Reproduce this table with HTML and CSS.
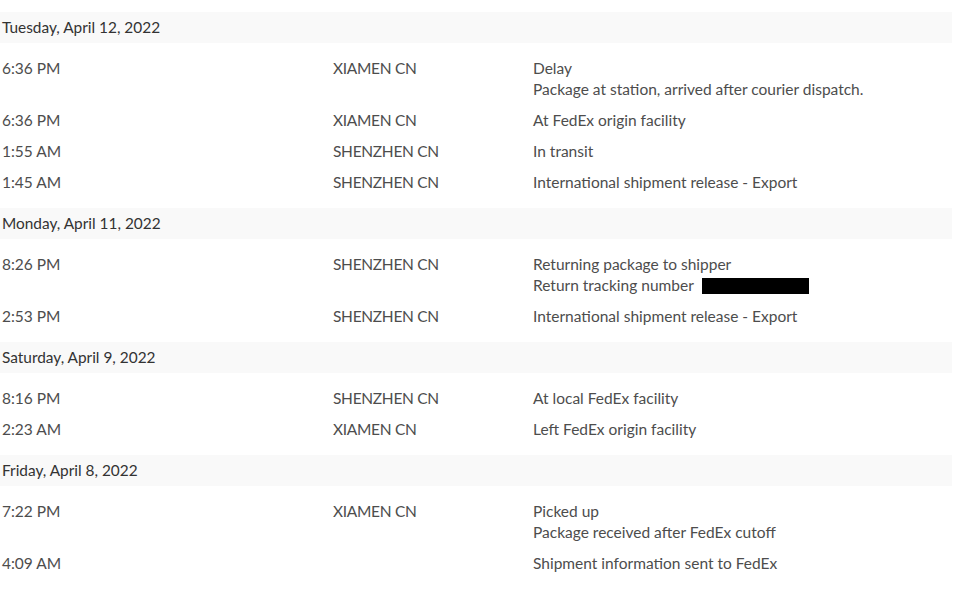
FILE: index.html
```html
<!DOCTYPE html>
<html>
<head>
<meta charset="utf-8">
<link rel="stylesheet" href="styles.css">
</head>
<body>
<div class="history">
  <section class="group">
    <div class="date">Tuesday, April 12, 2022</div>
    <div class="rows">
      <div class="row"><div class="time">6:36 PM</div><div class="loc">XIAMEN CN</div><div class="desc"><div>Delay</div><div>Package at station, arrived after courier dispatch.</div></div></div>
      <div class="row"><div class="time">6:36 PM</div><div class="loc">XIAMEN CN</div><div class="desc"><div>At FedEx origin facility</div></div></div>
      <div class="row"><div class="time">1:55 AM</div><div class="loc">SHENZHEN CN</div><div class="desc"><div>In transit</div></div></div>
      <div class="row"><div class="time">1:45 AM</div><div class="loc">SHENZHEN CN</div><div class="desc"><div>International shipment release - Export</div></div></div>
    </div>
  </section>
  <section class="group">
    <div class="date">Monday, April 11, 2022</div>
    <div class="rows">
      <div class="row"><div class="time">8:26 PM</div><div class="loc">SHENZHEN CN</div><div class="desc"><div>Returning package to shipper</div><div>Return tracking number <span class="redact"></span></div></div></div>
      <div class="row"><div class="time">2:53 PM</div><div class="loc">SHENZHEN CN</div><div class="desc"><div>International shipment release - Export</div></div></div>
    </div>
  </section>
  <section class="group">
    <div class="date">Saturday, April 9, 2022</div>
    <div class="rows">
      <div class="row"><div class="time">8:16 PM</div><div class="loc">SHENZHEN CN</div><div class="desc"><div>At local FedEx facility</div></div></div>
      <div class="row"><div class="time">2:23 AM</div><div class="loc">XIAMEN CN</div><div class="desc"><div>Left FedEx origin facility</div></div></div>
    </div>
  </section>
  <section class="group">
    <div class="date">Friday, April 8, 2022</div>
    <div class="rows">
      <div class="row"><div class="time">7:22 PM</div><div class="loc">XIAMEN CN</div><div class="desc"><div>Picked up</div><div>Package received after FedEx cutoff</div></div></div>
      <div class="row"><div class="time">4:09 AM</div><div class="loc"></div><div class="desc"><div>Shipment information sent to FedEx</div></div></div>
    </div>
  </section>
</div>
</body>
</html>
```
FILE: styles.css
```css
html, body {
  margin: 0;
  padding: 0;
  background: #fff;
}
body {
  font-family: "Lato", "Noto Sans", sans-serif;
  font-size: 15.5px;
  color: #4d4d4d;
}
.history {
  width: 952px;
  padding-top: 12px;
}
.date {
  background: #f9f9f9;
  height: 31px;
  line-height: 31px;
  padding-left: 2px;
  font-size: 15.4px;
  color: #333;
}
.rows {
  padding: 10px 0;
}
.row {
  display: grid;
  grid-template-columns: 331px 200px 1fr;
  padding: 5px 0;
  line-height: 21px;
}
.loc {
  letter-spacing: -0.3px;
}
.desc > div {
  height: 21px;
}
.time, .loc, .desc {
  padding-left: 2px;
}
.redact {
  display: inline-block;
  width: 107px;
  height: 16px;
  background: #000;
  vertical-align: -3px;
  margin-left: 5px;
}
```
